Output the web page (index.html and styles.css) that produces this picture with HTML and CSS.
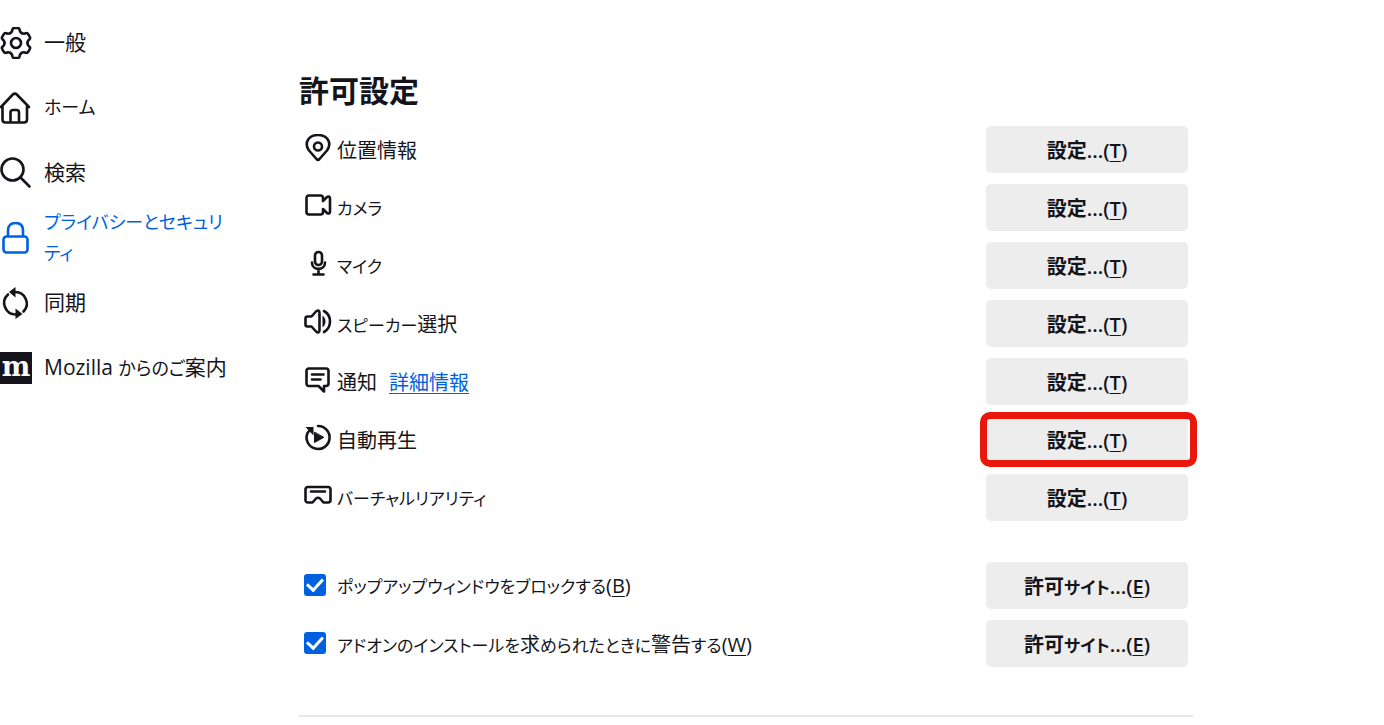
FILE: index.html
```
<!DOCTYPE html>
<html lang="ja">
<head>
  <meta charset="UTF-8" />
  <meta name="viewport" content="width=device-width, initial-scale=1" />
  <title>設定</title>
  <link rel="stylesheet" href="styles.css">
</head>
<body>
  <nav class="sidebar">
    <a class="nav-item" href="#general">
      <svg class="nav-icon" viewBox="0 0 32 32">
        <defs><path id="tooth" d="M-5.75-9.96Q-4.3-10.8-3.9-12L-3.5-13.6Q-3.1-15-1.6-15H1.6Q3.1-15 3.5-13.6L3.9-12Q4.3-10.8 5.75-9.96" /></defs>
        <g transform="translate(16 16)">
          <use href="#tooth" />
          <use href="#tooth" transform="rotate(60)" />
          <use href="#tooth" transform="rotate(120)" />
          <use href="#tooth" transform="rotate(180)" />
          <use href="#tooth" transform="rotate(240)" />
          <use href="#tooth" transform="rotate(300)" />
          <circle r="5" />
        </g>
      </svg>
      <span>一般</span>
    </a>
    <a class="nav-item" href="#home">
      <svg class="nav-icon" viewBox="0 0 32 32"><path d="M1 15 12.8 2.5Q14.8.7 16.8 2.5L29 15M2.5 14V27.5Q2.5 30.5 5.5 30.5H24Q27 30.5 27 27.5V14M10.5 30V20.5Q10.5 18 13 18H16.5Q19 18 19 20.5V30" /></svg>
      <span class="kana">ホーム</span>
    </a>
    <a class="nav-item" href="#search">
      <svg class="nav-icon" viewBox="0 0 32 32"><circle cx="12.5" cy="12.5" r="11" /><path d="M20.5 20.5 29.5 29.5" /></svg>
      <span>検索</span>
    </a>
    <a class="nav-item active" href="#privacy">
      <svg class="nav-icon" viewBox="0 0 32 32"><rect x="3.5" y="14.5" width="24" height="16" rx="3" /><path d="M8 14V8.5C8 3.5 11 1 15.5 1S23 3.5 23 8.5V14" /></svg>
      <span class="kana">プライバシーとセキュリティ</span>
    </a>
    <a class="nav-item" href="#sync">
      <svg class="nav-icon" viewBox="0 0 32 32">
        <path d="M8 7.5A11.5 11.5 0 0 0 16 27.5M15 5A11.5 11.5 0 0 1 23.5 24.5" />
        <path class="solid" stroke="none" d="M15.5 0V10.5L9 5ZM15.5 21.5V32L22.500 27Z" />
      </svg>
      <span>同期</span>
    </a>
    <a class="nav-item" href="#mozilla">
      <span class="nav-icon logo">m</span>
      <span>Mozilla <span class="kana">からのご</span>案内</span>
    </a>
  </nav>

  <main class="content">
    <h2>許可設定</h2>

    <div class="row">
      <svg class="row-icon" viewBox="0 0 28 28"><path d="M12.5 25 5 16.500C-.5 8.500 5 1 14 1S28.500 8.500 23 16.500L15.500 25Q14 26.500 12.500 25Z" /><circle cx="14" cy="12.5" r="4" /></svg>
      <span class="row-label">位置情報</span>
      <button type="button">設定...(<u>T</u>)</button>
    </div>
    <div class="row">
      <svg class="row-icon" viewBox="0 0 28 28"><path d="M19 9V6Q19 3.5 16.5 3.5H5Q2.5 3.5 2.5 6V20Q2.5 22.5 5 22.5H16.5Q19 22.5 19 20V17L23 21Q26 22.5 26 19.5V6.5Q26 3.5 23 5L19 9Z" /></svg>
      <span class="row-label kana">カメラ</span>
      <button type="button">設定...(<u>T</u>)</button>
    </div>
    <div class="row">
      <svg class="row-icon" viewBox="0 0 28 28"><rect x="11" y="2" width="7" height="13" rx="3.5" /><path d="M8 12.5C8 21 21 21 21 12.5M14.5 19V24M9.5 24.5H19.5" /></svg>
      <span class="row-label kana">マイク</span>
      <button type="button">設定...(<u>T</u>)</button>
    </div>
    <div class="row">
      <svg class="row-icon" viewBox="0 0 28 28"><path d="M7.5 8.5H3.5Q1.5 8.5 1.5 10.5V16.5Q1.5 18.5 3.5 18.5H7.5L12 23.5Q15.5 26 15.5 22V5Q15.5 1 12 3.5L7.5 8.5ZM20 3C28 7.5 28 19.5 20 24" /><path class="solid" stroke="none" d="M18.5 7.5C22.5 10.5 22.5 16.5 18.5 19.5Z" /></svg>
      <span class="row-label"><span class="kana">スピーカー</span>選択</span>
      <button type="button">設定...(<u>T</u>)</button>
    </div>
    <div class="row">
      <svg class="row-icon" viewBox="0 0 28 28"><path d="M5 2.5H22Q24.5 2.5 24.5 5V17.5Q24.5 20 22 20H20V25.5L14.5 20H5Q2.5 20 2.5 17.5V5Q2.5 2.5 5 2.5ZM8 8.5H19.5M8 13.5H16.5" /></svg>
      <span class="row-label">通知<a href="#more">詳細情報</a></span>
      <button type="button">設定...(<u>T</u>)</button>
    </div>
    <div class="row">
      <svg class="row-icon" viewBox="0 0 28 28"><path d="M14 2A11.5 11.5 0 1 1 3.5 9L6 6" /><path class="solid" stroke="none" d="M1.500 3H9.500V11.500Z" /><path class="solid" stroke-width="1" d="M10.5 8.5V18.5L19.5 13.5Z" /></svg>
      <span class="row-label">自動再生</span>
      <span class="marked"><button type="button">設定...(<u>T</u>)</button></span>
    </div>
    <div class="row">
      <svg class="row-icon" viewBox="0 0 28 28"><path d="M4 5H24Q26.500 5 26.500 7.500V18Q26.500 20.500 24 20.500H19.500L16 16.500Q14 15 12 16.500L8.500 20.500H4Q1.500 20.500 1.500 18V7.500Q1.500 5 4 5ZM7 9.500H21" /></svg>
      <span class="row-label kana">バーチャルリアリティ</span>
      <button type="button">設定...(<u>T</u>)</button>
    </div>

    <div class="checks">
      <div class="row">
        <input type="checkbox" id="popup" checked>
        <label class="row-label" for="popup"><span class="kana">ポップアップウィンドウをブロックする</span>(<u>B</u>)</label>
        <button type="button">許可<span class="kana">サイト</span>...(<u>E</u>)</button>
      </div>
      <div class="row">
        <input type="checkbox" id="addon" checked>
        <label class="row-label" for="addon"><span class="kana">アドオンのインストールを</span>求<span class="kana">められたときに</span>警告<span class="kana">する</span>(<u>W</u>)</label>
        <button type="button">許可<span class="kana">サイト</span>...(<u>E</u>)</button>
      </div>
    </div>
  </main>
</body>
</html>
```
FILE: styles.css
```
* {
  box-sizing: border-box;
}

body {
  margin: 0;
  display: flex;
  background: #fff;
  color: #15141a;
  font-family: "Open Sans", "Noto Sans CJK JP", sans-serif;
  font-size: 20px;
  font-feature-settings: "palt";
}

.sidebar {
  width: 230px;
  flex-shrink: 0;
  padding-top: 10px;
}

.nav-item {
  display: flex;
  align-items: center;
  gap: 12px;
  height: 65px;
  color: inherit;
  font-size: 21px;
  line-height: 31px;
  text-decoration: none;
}

.nav-item.active {
  color: #0061e0;
}

.nav-icon {
  width: 32px;
  height: 32px;
  flex-shrink: 0;
}

.logo {
  background: #15141a;
  color: #fff;
  font: bold 27px/30px "DejaVu Serif", serif;
  text-align: center;
}

.row-icon {
  width: 28px;
  height: 28px;
  margin-bottom: 3px;
  flex-shrink: 0;
}

svg {
  fill: none;
  stroke: currentColor;
  stroke-width: 2.6;
  stroke-linecap: round;
  stroke-linejoin: round;
}

.solid {
  fill: currentColor;
}

.content {
  flex: 1;
  max-width: 894px;
  margin: 0 24px 0 69px;
  padding: 70px 0 43px;
  border-bottom: 2px solid #e6e6e8;
}

h2 {
  margin: 0 0 8px;
  font-size: 30px;
  line-height: 42px;
}

.row {
  display: flex;
  align-items: center;
  height: 58px;
  padding: 0 5px;
}

.row-label {
  flex: 1;
  margin-left: 5px;
}

.row-label a {
  margin-left: 12px;
  color: #0061e0;
  text-decoration-thickness: 1px;
  text-underline-offset: 3px;
}

/* kana runs are set narrower than the kanji */
.kana {
  font-size: 17px;
}

.nav-item .kana {
  font-size: 18px;
}

u {
  text-decoration-thickness: 1px;
  text-underline-offset: 3px;
}

button {
  width: 202px;
  height: 47px;
  border: none;
  border-radius: 5px;
  background: #ededed;
  color: inherit;
  font: inherit;
  font-weight: 600;
  font-feature-settings: inherit;
}

/* red frame round the autoplay button */
.marked {
  position: relative;
  display: flex;
}

.marked::after {
  content: "";
  position: absolute;
  inset: -4px -9px -4px -6px;
  border: 7px solid #e8190c;
  border-radius: 10px;
  pointer-events: none;
}

.checks {
  margin-top: 30px;
}

input[type="checkbox"] {
  appearance: none;
  width: 22px;
  height: 22px;
  margin: 0 6px 0 0;
  border-radius: 3px;
  background: #0061e0;
  display: grid;
  place-items: center;
}

input[type="checkbox"]:checked::after {
  content: "";
  width: 7px;
  height: 13px;
  margin-bottom: 4px;
  border: solid #fff;
  border-width: 0 3px 3px 0;
  transform: rotate(42deg);
}
```
